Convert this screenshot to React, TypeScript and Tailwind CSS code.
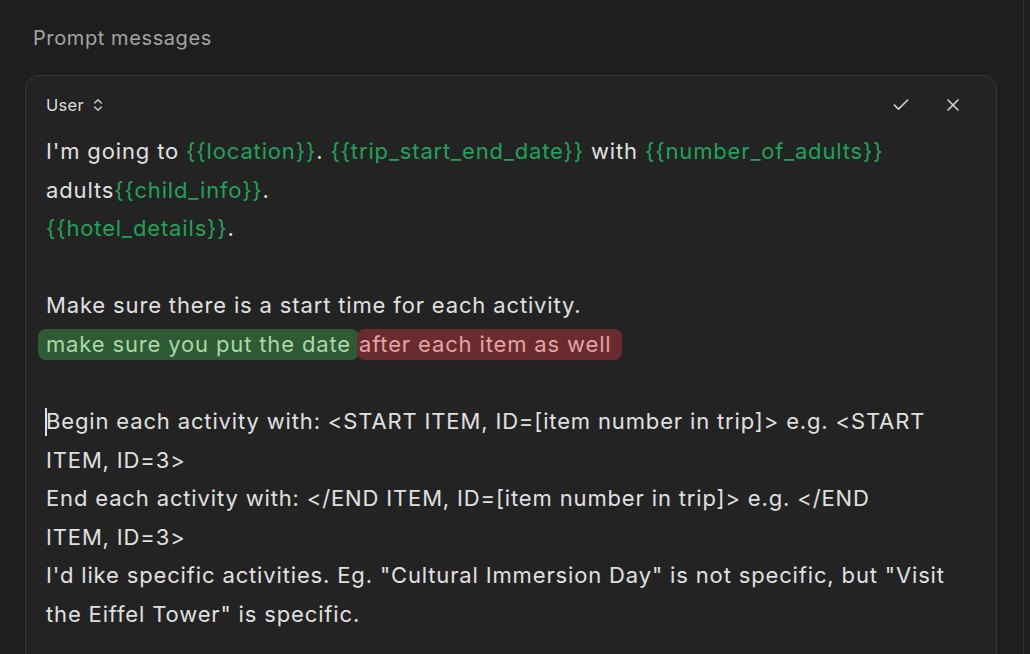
import React from 'react';
import { ChevronsUpDown, Check, X } from 'lucide-react';

const Var = ({ children }: { children: React.ReactNode }) => (
  <span className="text-[#1fa35a]">{children}</span>
);

export default function App() {
  return (
    <div className="w-[1030px] h-[654px] overflow-hidden bg-[#1e1e1e] font-['Inter',sans-serif] flex">
      <div className="flex-1 pl-[25px] pr-[26px] pt-[24px]">
        <div className="text-[20px] text-[#a3a3a3] pl-[8px] leading-[28px] tracking-[0.6px]">Prompt messages</div>
        <div className="mt-[23px] h-[700px] rounded-t-[14px] border border-[#353535] bg-[#232323] pl-[20px] pr-[24px]">
          <div className="flex items-center h-[56px] pt-[2px]">
            <span className="text-[16.5px] text-[#dcdcdc] tracking-[0.3px]">User</span>
            <ChevronsUpDown size={16} className="ml-[6px] text-[#cfcfcf]" strokeWidth={2} />
            <div className="flex-1" />
            <Check size={20} className="text-[#cfcfcf] mr-[32px]" strokeWidth={2} />
            <X size={20} className="text-[#cfcfcf] mr-[9px]" strokeWidth={2} />
          </div>
          <div className="text-[22px] leading-[38.5px] text-[#e0e0e0] tracking-[0.85px] whitespace-nowrap">
            <div>
              I'm going to <Var>{'{{location}}'}</Var>. <Var>{'{{trip_start_end_date}}'}</Var> with{' '}
              <Var>{'{{number_of_adults}}'}</Var>
            </div>
            <div>
              adults<Var>{'{{child_info}}'}</Var>.
            </div>
            <div>
              <Var>{'{{hotel_details}}'}</Var>.
            </div>
            <div>&nbsp;</div>
            <div>Make sure there is a start time for each activity.</div>
            <div className="flex -ml-[8px]">
              <span className="bg-[#2f5b34] text-[#a9d9a6] rounded-[8px] px-[8px] leading-[31px] my-[4px]">make sure you put the date</span>
              <span className="bg-[#6a2b2f] text-[#e2a3a5] rounded-[8px] pl-[2px] pr-[10px] -ml-[2px] leading-[31px] my-[4px]">after each item as well</span>
            </div>
            <div>&nbsp;</div>
            <div className="relative">
              <span className="absolute -left-[1px] top-[6px] w-[2px] h-[28px] bg-[#e2e2e2]" />
              Begin each activity with: &lt;START ITEM, ID=[item number in trip]&gt; e.g. &lt;START
              <br />
              ITEM, ID=3&gt;
            </div>
            <div>
              End each activity with: &lt;/END ITEM, ID=[item number in trip]&gt; e.g. &lt;/END
              <br />
              ITEM, ID=3&gt;
            </div>
            <div>
              I'd like specific activities. Eg. "Cultural Immersion Day" is not specific, but "Visit
              <br />
              the Eiffel Tower" is specific.
            </div>
          </div>
        </div>
      </div>
      <div className="w-[7px] border-l border-[#333] bg-[#1e1e1e]" />
    </div>
  );
}
